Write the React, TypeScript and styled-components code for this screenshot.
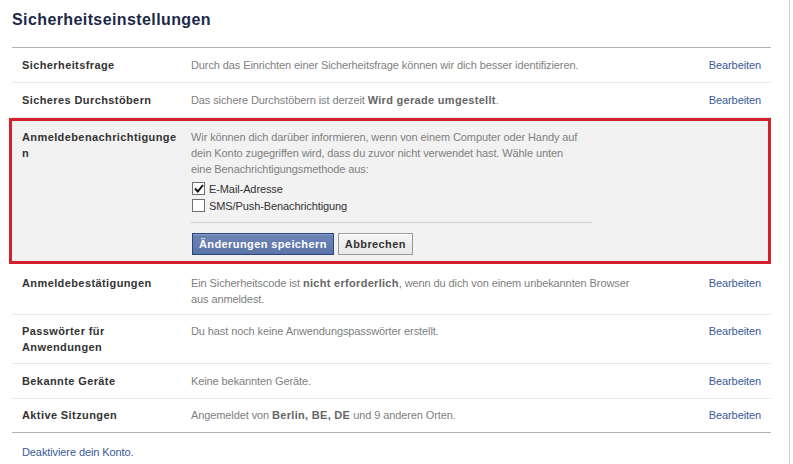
import React, { useState } from "react";
import styled, { createGlobalStyle } from "styled-components";

const GlobalStyle = createGlobalStyle`
  html, body {
    margin: 0;
    padding: 0;
    background: #fff;
  }
  body {
    font-family: "Liberation Sans", Arial, sans-serif;
    font-size: 11px;
    letter-spacing: -0.1px;
    color: #333;
  }
`;

const Page = styled.div`
  width: 790px;
  height: 464px;
  border-right: 1px solid #cfcfcf;
  box-sizing: border-box;
  padding: 0 18px 0 12px;
  overflow: hidden;
`;

const Title = styled.h2`
  margin: 0;
  padding: 11px 0 0 0;
  height: 47px;
  box-sizing: border-box;
  font-size: 16px;
  font-weight: bold;
  letter-spacing: 0.4px;
  color: #1c2a47;
  line-height: 18px;
`;

const List = styled.div`
  border-top: 1px solid #b3b3b3;
  border-bottom: 1px solid #b3b3b3;
`;

const Row = styled.div<{ $last?: boolean; $top?: number; $bottom?: number }>`
  display: grid;
  grid-template-columns: 169px 1fr auto;
  padding: ${(p) => p.$top ?? 9}px 10px ${(p) => p.$bottom ?? 9}px 10px;
  line-height: 16px;
  border-bottom: ${(p) => (p.$last ? "none" : "1px solid #e9e9e9")};
`;

const OpenRow = styled.div`
  display: grid;
  grid-template-columns: 169px 1fr;
  margin-left: -3px;
  padding: 8px 7px 6px 10px;
  line-height: 16px;
  background: #f2f2f2;
  border: 3px solid #d2202c;
`;

const Label = styled.div`
  font-weight: bold;
  color: #333;
  letter-spacing: 0.4px;
  width: 158px;
  overflow-wrap: anywhere;
`;

const Content = styled.div<{ $wide?: boolean }>`
  color: #808080;
  max-width: ${(p) => (p.$wide ? 450 : 390)}px;

  b {
    color: #666;
    letter-spacing: 0.3px;
  }
`;

const EditLink = styled.a`
  color: #3b5998;
  text-decoration: none;
  cursor: pointer;
  padding-left: 12px;
`;

const Options = styled.div`
  margin-top: 3px;
`;

const Option = styled.label`
  display: flex;
  align-items: center;
  gap: 4px;
  height: 17px;
  color: #333;
  cursor: pointer;
`;

const Box = styled.span`
  width: 13px;
  height: 13px;
  box-sizing: border-box;
  border: 1px solid #6f6f6f;
  background: #fff;
  display: flex;
  align-items: center;
  justify-content: center;
  margin-left: 1px;
`;

const Divider = styled.div`
  height: 1px;
  background: #cfcfcf;
  margin: 8px 0 10px 0;
  width: 401px;
`;

const Buttons = styled.div`
  display: flex;
  gap: 4px;
  margin-left: 1px;
`;

const Button = styled.button<{ $primary?: boolean }>`
  height: 22px;
  padding: 0 6px;
  font-family: inherit;
  font-size: 11px;
  font-weight: bold;
  letter-spacing: 0.4px;
  border: 1px solid ${(p) => (p.$primary ? "#29447e" : "#999")};
  background: ${(p) =>
    p.$primary ? "linear-gradient(#6d84b4, #5b74a8)" : "linear-gradient(#f5f5f5, #e8e8e8)"};
  color: ${(p) => (p.$primary ? "#fff" : "#333")};
  box-shadow: ${(p) => (p.$primary ? "inset 0 1px 0 #8a9cc2" : "inset 0 1px 0 #fff")};
  cursor: pointer;
`;

const Footer = styled.div`
  padding: 11px 0 0 10px;
  line-height: 16px;

  a {
    color: #3b5998;
    text-decoration: none;
  }
`;

const Check = () => (
  <svg width="10" height="9" viewBox="0 0 10 9">
    <path d="M1 4.5 L3.8 7.5 L9 1" fill="none" stroke="#111" strokeWidth="2" />
  </svg>
);

const items = [
  {
    label: "Sicherheitsfrage",
    text: <>Durch das Einrichten einer Sicherheitsfrage können wir dich besser identifizieren.</>,
  },
  {
    label: "Sicheres Durchstöbern",
    text: (
      <>
        Das sichere Durchstöbern ist derzeit <b>Wird gerade umgestellt</b>.
      </>
    ),
  },
];

const after = [
  {
    label: "Anmeldebestätigungen",
    top: 11,
    bottom: 7,
    text: (
      <>
        Ein Sicherheitscode ist <b>nicht erforderlich</b>, wenn du dich von einem unbekannten Browser aus
        anmeldest.
      </>
    ),
  },
  {
    label: "Passwörter für Anwendungen",
    top: 8,
    bottom: 8,
    text: <>Du hast noch keine Anwendungspasswörter erstellt.</>,
  },
  { label: "Bekannte Geräte", top: 9, bottom: 9, text: <>Keine bekannten Geräte.</> },
  {
    label: "Aktive Sitzungen",
    top: 8,
    bottom: 9,
    text: (
      <>
        Angemeldet von <b>Berlin, BE, DE</b> und 9 anderen Orten.
      </>
    ),
  },
];

export default function App() {
  const [mail, setMail] = useState(true);
  const [sms, setSms] = useState(false);

  return (
    <>
      <GlobalStyle />
      <Page>
        <Title>Sicherheitseinstellungen</Title>
        <List>
          {items.map((it) => (
            <Row key={it.label}>
              <Label>{it.label}</Label>
              <Content $wide>{it.text}</Content>
              <EditLink>Bearbeiten</EditLink>
            </Row>
          ))}
          <OpenRow>
            <Label>Anmeldebenachrichtigungen</Label>
            <div>
              <Content>
                Wir können dich darüber informieren, wenn von einem Computer oder Handy auf dein Konto
                zugegriffen wird, dass du zuvor nicht verwendet hast. Wähle unten eine
                Benachrichtigungsmethode aus:
              </Content>
              <Options>
                <Option onClick={() => setMail(!mail)}>
                  <Box>{mail && <Check />}</Box>
                  E-Mail-Adresse
                </Option>
                <Option onClick={() => setSms(!sms)}>
                  <Box>{sms && <Check />}</Box>
                  SMS/Push-Benachrichtigung
                </Option>
              </Options>
              <Divider />
              <Buttons>
                <Button $primary>Änderungen speichern</Button>
                <Button>Abbrechen</Button>
              </Buttons>
            </div>
          </OpenRow>
          {after.map((it, i) => (
            <Row key={it.label} $top={it.top} $bottom={it.bottom} $last={i === after.length - 1}>
              <Label>{it.label}</Label>
              <Content $wide>{it.text}</Content>
              <EditLink>Bearbeiten</EditLink>
            </Row>
          ))}
        </List>
        <Footer>
          <a>Deaktiviere dein Konto.</a>
        </Footer>
      </Page>
    </>
  );
}
